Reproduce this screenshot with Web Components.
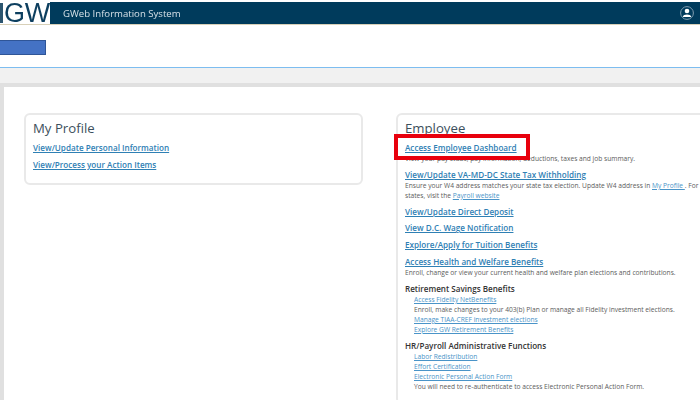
<!DOCTYPE html>
<html lang="en">
<head>
<meta charset="utf-8">
<title>GWeb Information System</title>
<style>
  html, body { margin: 0; height: 404px; overflow: hidden; background: #fff; }
  body { font-family: "Open Sans", "Liberation Sans", sans-serif; }
</style>
</head>
<body>
<gw-page>
  <gw-header slot="header"></gw-header>
  <gw-card slot="left" heading="My Profile">
    <gw-link big flush>View/Update Personal Information</gw-link>
    <gw-link big>View/Process your Action Items</gw-link>
  </gw-card>
  <gw-card slot="right" heading="Employee">
    <gw-link big flush>Access Employee Dashboard</gw-link>
    <gw-note>View your pay stubs, pay information, deductions, taxes and job summary.</gw-note>
    <gw-link big>View/Update VA-MD-DC State Tax Withholding</gw-link>
    <gw-note>Ensure your W4 address matches your state tax election. Update W4 address in <gw-link inline>My Profile</gw-link>. For<br>states, visit the <gw-link inline>Payroll website</gw-link></gw-note>
    <gw-link big>View/Update Direct Deposit</gw-link>
    <gw-link big>View D.C. Wage Notification</gw-link>
    <gw-link big>Explore/Apply for Tuition Benefits</gw-link>
    <gw-link big>Access Health and Welfare Benefits</gw-link>
    <gw-note>Enroll, change or view your current health and welfare plan elections and contributions.</gw-note>
    <gw-group heading="Retirement Savings Benefits">
      <gw-link>Access Fidelity NetBenefits</gw-link>
      <gw-note>Enroll, make changes to your 403(b) Plan or manage all Fidelity investment elections.</gw-note>
      <gw-link>Manage TIAA-CREF investment elections</gw-link>
      <gw-link>Explore GW Retirement Benefits</gw-link>
    </gw-group>
    <gw-group heading="HR/Payroll Administrative Functions">
      <gw-link>Labor Redistribution</gw-link>
      <gw-link>Effort Certification</gw-link>
      <gw-link>Electronic Personal Action Form</gw-link>
      <gw-note>You will need to re-authenticate to access Electronic Personal Action Form.</gw-note>
    </gw-group>
  </gw-card>
</gw-page>
<gw-callout></gw-callout>
<script>
  // small helper, every element gets an open shadow root from a string
  const define = (name, html) => {
    customElements.define(name, class extends HTMLElement {
      constructor () {
        super()
        this.attachShadow({ mode: 'open' }).innerHTML = html
      }

      connectedCallback () {
        const heading = this.shadowRoot.querySelector('[data-heading]')
        if (heading) heading.textContent = this.getAttribute('heading')
      }
    })
  }

  define('gw-page', `
    <style>
      :host { display: block; width: 700px; height: 404px; overflow: hidden; filter: blur(.3px); }
      .band { box-sizing: border-box; height: 42px; padding-top: 15px; }
      .button { box-sizing: border-box; width: 46px; height: 15px; background: #4472c4; border: 1px solid #2f5597; border-left: 0; }
      .strip { height: 15px; background: #f1f1f1; border-top: 1px solid #7dbdf0; }
      .shade { height: 4px; background: #e0e0e0; }
      .main { display: flex; height: 313px; overflow: hidden; border-left: 4px solid #e0e0e0; box-sizing: border-box; background: #fff; padding: 26px 0 0 20px; gap: 33px; }
      .left { flex: 0 0 339px; }
      .right { flex: 0 0 330px; }
    </style>
    <slot name="header"></slot>
    <div class="band"><div class="button"></div></div>
    <div class="strip"></div>
    <div class="shade"></div>
    <div class="main">
      <div class="left"><slot name="left"></slot></div>
      <div class="right"><slot name="right"></slot></div>
    </div>
  `)

  define('gw-header', `
    <style>
      :host { display: block; height: 25px; box-sizing: border-box; padding-top: 2px; background: #fff; }
      .bar { display: flex; align-items: center; height: 23px; box-sizing: border-box; background: #003b5c; border-bottom: 1px solid #d8d0b8; color: #d5e0e7; font-size: 9.6px; }
      .logo { display: flex; flex: 0 0 50px; height: 22px; background: #fff; color: #0d3f5f; font: 400 27px/22px "Liberation Sans", sans-serif; letter-spacing: -.3px; white-space: nowrap; }
      .stub { flex: 0 0 3px; margin: 1px 1px 1px 0; background: #2c556f; }
      .title { flex: 1; margin-left: 13px; }
      svg { display: block; margin-right: 6px; }
    </style>
    <div class="bar">
      <div class="logo"><span class="stub"></span>GW</div>
      <div class="title">GWeb Information System</div>
      <svg width="14" height="14" viewBox="0 0 14 14" aria-hidden="true">
        <circle cx="7" cy="7" r="6.4" fill="none" stroke="#7f9db0" stroke-width="1"/>
        <circle cx="7" cy="5" r="2.3" fill="#fff"/>
        <path d="M2.800 11c.3-2 2-2.600 4.200-2.600s3.900.6 4.200 2.600z" fill="#fff"/>
      </svg>
    </div>
  `)

  define('gw-card', `
    <style>
      :host { display: block; box-sizing: border-box; min-height: 72px; border: 2px solid #e9e9e9; border-radius: 6px; padding: 3px 7px 11px; background: #fff; }
      h2 { margin: 0 0 4px; font: 400 13.2px/20px "Open Sans", sans-serif; color: #3c4f5c; }
    </style>
    <h2 data-heading></h2>
    <slot></slot>
  `)

  define('gw-group', `
    <style>
      :host { display: block; margin-top: 4px; }
      h3 { margin: 0; font: 600 8.1px/13px "Open Sans", sans-serif; color: #333; }
      div { padding-left: 9px; }
    </style>
    <h3 data-heading></h3>
    <div><slot></slot></div>
  `)

  define('gw-link', `
    <style>
      :host { display: block; font: 400 6.65px/10px "Open Sans", sans-serif; color: #4a94c8; text-decoration: underline; white-space: nowrap; }
      :host([big]) { font: 600 8.15px/12px "Open Sans", sans-serif; color: #2f80b4; margin-top: 4.8px; }
      :host([flush]) { margin-top: 0; }
      :host([inline]) { display: inline; font: inherit; color: #4a94c8; }
    </style>
    <slot></slot>
  `)

  define('gw-note', `
    <style>
      :host { display: block; font: 400 6.65px/10px "Open Sans", sans-serif; color: #5c5c5c; white-space: nowrap; }
    </style>
    <slot></slot>
  `)

  // the red box somebody drew over the screenshot
  define('gw-callout', `
    <style>
      :host { position: absolute; left: 394px; top: 134px; width: 136px; height: 26px; box-sizing: border-box; border: 4px solid #e8000d; }
    </style>
  `)
</script>
</body>
</html>
